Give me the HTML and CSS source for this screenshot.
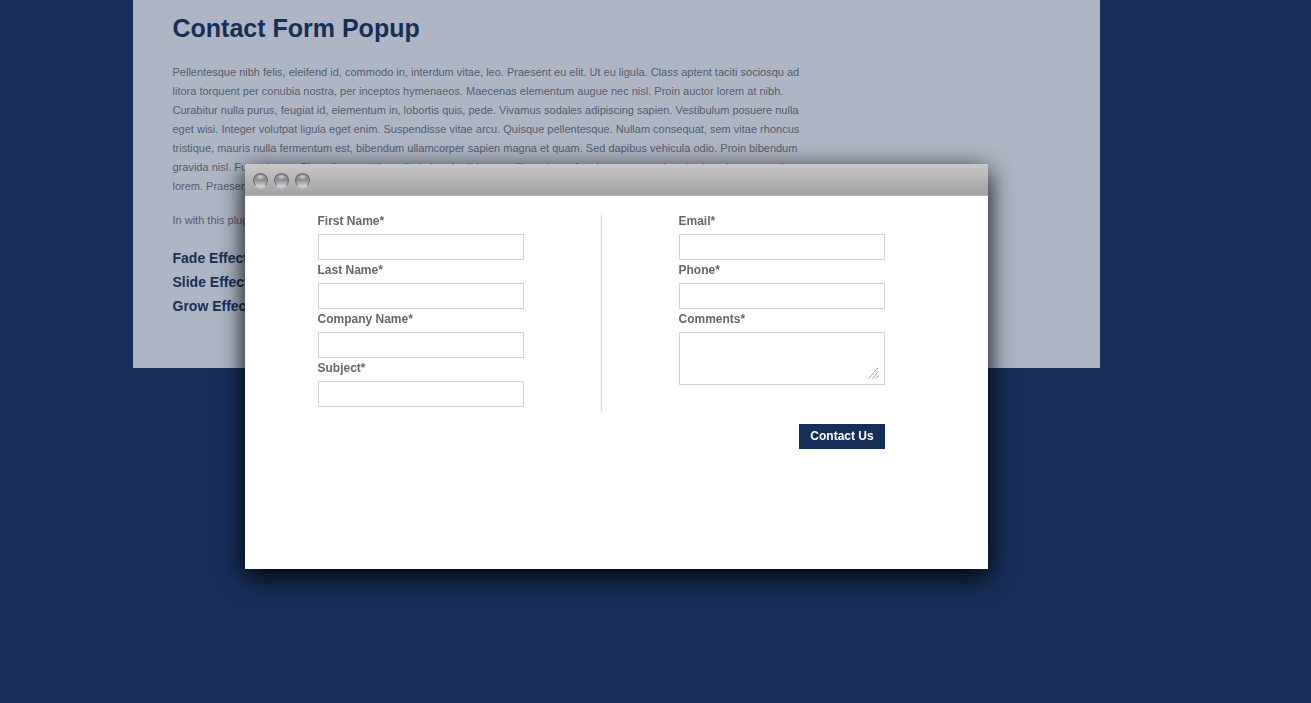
FILE: index.html
```html
<!DOCTYPE html>
<html lang="en">
<head>
    <meta charset="UTF-8">
    <meta name="viewport" content="width=device-width, initial-scale=1.0">
    <title>Contact Form Popup</title>
    <link rel="stylesheet" href="styles.css">
</head>
<body>
    <div class="page">
        <h1>Contact Form Popup</h1>
        <p class="intro">Pellentesque nibh felis, eleifend id, commodo in, interdum vitae, leo. Praesent eu elit. Ut eu ligula. Class aptent taciti sociosqu ad litora torquent per conubia nostra, per inceptos hymenaeos. Maecenas elementum augue nec nisl. Proin auctor lorem at nibh. Curabitur nulla purus, feugiat id, elementum in, lobortis quis, pede. Vivamus sodales adipiscing sapien. Vestibulum posuere nulla eget wisi. Integer volutpat ligula eget enim. Suspendisse vitae arcu. Quisque pellentesque. Nullam consequat, sem vitae rhoncus tristique, mauris nulla fermentum est, bibendum ullamcorper sapien magna et quam. Sed dapibus vehicula odio. Proin bibendum gravida nisl. Fusce lorem. Phasellus sagittis, nulla in hendrerit laoreet, libero lacus feugiat urna, eget hendrerit pede magna vitae lorem. Praesent mauris.</p>
        <p class="intro">In with this plugin</p>
        <ul class="effects">
            <li><a href="#">Fade Effect</a></li>
            <li><a href="#">Slide Effect</a></li>
            <li><a href="#">Grow Effect</a></li>
        </ul>
    </div>

    <div class="overlay"></div>

    <div class="popup">
        <div class="popup-bar">
            <span class="dot"></span>
            <span class="dot"></span>
            <span class="dot"></span>
        </div>
        <form class="popup-form">
            <div class="columns">
                <div class="col col-left">
                    <div class="field"><label>First Name*</label><input type="text"></div>
                    <div class="field"><label>Last Name*</label><input type="text"></div>
                    <div class="field"><label>Company Name*</label><input type="text"></div>
                    <div class="field"><label>Subject*</label><input type="text"></div>
                </div>
                <div class="col col-right">
                    <div class="field"><label>Email*</label><input type="text"></div>
                    <div class="field"><label>Phone*</label><input type="text"></div>
                    <div class="field">
                        <label>Comments*</label>
                        <div class="textarea-wrap">
                            <textarea></textarea>
                            <!-- resize grip -->
                            <svg class="grip" width="11" height="12" viewBox="0 0 11 12">
                                <path d="M0.5 11.5 L10.5 0.5 M4.5 11.5 L10.5 4.5 M8 11.5 L10.5 8.5" stroke="#808080" stroke-width="1" stroke-dasharray="1.6 0.5" fill="none"/>
                            </svg>
                        </div>
                    </div>
                </div>
            </div>
            <div class="actions">
                <button type="button" class="submit-btn">Contact Us</button>
            </div>
        </form>
    </div>
</body>
</html>
```

FILE: styles.css
```css
html, body {
    height: 100%;
}
body {
    margin: 0;
    background-color: #162f58;
    font-family: "Liberation Sans", Arial, sans-serif;
    color: #777;
    overflow: hidden;
}
.page {
    box-sizing: border-box;
    width: 967px;
    height: 368px;
    margin-left: 133px;
    padding: 12px 40px 0 39.5px;
    background-color: white;
}
h1 {
    margin: 0 0 19px;
    font-size: 25px;
    line-height: 32px;
    color: #162f58;
}
.intro {
    width: 630px;
    margin: 0 0 15px;
    font-size: 11px;
    line-height: 19px;
}
.effects {
    list-style: none;
    margin: 16px 0 0;
    padding: 0;
}
.effects li {
    font-size: 14px;
    font-weight: bold;
    line-height: 24px;
}
.effects a {
    color: #162f58;
    text-decoration: none;
}
.overlay {
    position: fixed;
    top: 0;
    left: 0;
    right: 0;
    bottom: 0;
    background-color: rgba(22,47,88,0.35);
}
.popup {
    position: absolute;
    top: 164px;
    left: 245px;
    width: 743px;
    height: 405px;
    background-color: white;
    border-radius: 3px 3px 0 0;
    box-shadow: 0 7px 26px #000;
}
.popup-bar {
    box-sizing: border-box;
    display: flex;
    align-items: center;
    gap: 6px;
    height: 32px;
    padding: 2px 0 0 8px;
    background: linear-gradient(#c8c8c8, #a2a2a2);
    border-radius: 3px 3px 0 0;
    border-bottom: 1px solid #b4b4b4;
}
.dot {
    box-sizing: border-box;
    width: 15px;
    height: 15px;
    border-radius: 50%;
    border: 1px solid #6c6c70;
    border-bottom-color: #c8c8ca;
    background: radial-gradient(ellipse 5px 3px at 50% 22%, #d2d2d6, transparent), linear-gradient(#7e7e84, #8f8f95 50%, #dedee0);
    box-shadow: 0 1px 0 #c2c2c2;
}
.popup-form {
    padding: 19px 103px 0 73px;
}
.columns {
    display: flex;
}
.col-left {
    box-sizing: border-box;
    width: 284px;
    height: 196px;
    border-right: 1px solid #d4d4d4;
}
.col-right {
    margin-left: 77px;
}
.field {
    display: flex;
    flex-direction: column;
    width: 206px;
    height: 49px;
}
.field label {
    flex: none;
    height: 19px;
    margin-left: -0.5px;
    font-size: 12px;
    font-weight: bold;
    line-height: 12px;
    color: #666;
}
.field input,
.field textarea {
    display: block;
    box-sizing: border-box;
    flex: none;
    width: 206px;
    height: 26px;
    margin: 0;
    border: 1px solid #d2d2d2;
    background-color: white;
}
.textarea-wrap {
    position: relative;
    flex: none;
}
.field textarea {
    height: 53px;
    resize: none;
}
.grip {
    position: absolute;
    right: 6px;
    bottom: 6px;
}
.actions {
    display: flex;
    justify-content: flex-end;
    margin-top: 13px;
}
.submit-btn {
    width: 86px;
    height: 25px;
    padding: 0 0 2px;
    border: none;
    background-color: #162f58;
    color: white;
    font-family: inherit;
    font-size: 12px;
    font-weight: bold;
}
```
